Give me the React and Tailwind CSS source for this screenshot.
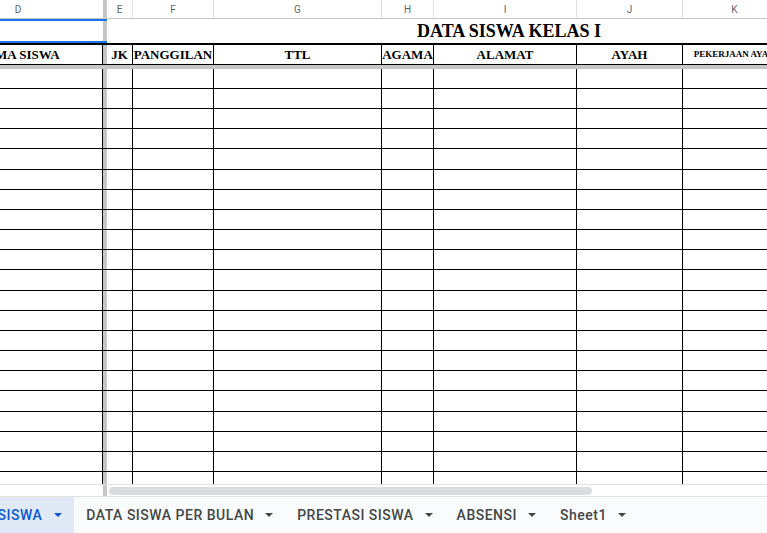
import React from "react";

const cols = [
  { letter: "E", w: "w-[26px]", head: "JK" },
  { letter: "F", w: "w-[81px]", head: "PANGGILAN" },
  { letter: "G", w: "w-[168px]", head: "TTL" },
  { letter: "H", w: "w-[52px]", head: "AGAMA" },
  { letter: "I", w: "w-[143px]", head: "ALAMAT" },
  { letter: "J", w: "w-[106px]", head: "AYAH" },
  { letter: "K", w: "w-[104px]", head: "PEKERJAAN AYAH", small: true },
];

const tabs = ["DATA SISWA PER BULAN", "PRESTASI SISWA", "ABSENSI", "Sheet1"];

const rows = Array.from({ length: 20 }, (_, i) => i);
const tallRows = [4, 10, 16];

const Caret = ({ color }) => (
  <svg width="8" height="4" viewBox="0 0 8 4" className="shrink-0">
    <path d="M0 0h8L4 4z" fill={color} />
  </svg>
);

// the grey freeze bar between frozen column D and the rest
const Bar = ({ className = "" }) => (
  <div className={"w-[4px] shrink-0 bg-[#c4c7c5] " + className}></div>
);

const App = () => {
  return (
    <div className="w-[767px] h-[533px] overflow-hidden bg-white flex flex-col font-['Roboto',sans-serif]">
      {/* column letters */}
      <div className="flex h-[19px] shrink-0 border-b border-[#c4c7c5]">
        <div className="w-[103px] shrink-0 overflow-hidden">
          <div className="-ml-[66px] w-[168px] h-full flex items-center justify-center text-[10px] text-[#5f6368]">
            D
          </div>
        </div>
        <Bar />
        <div className="flex flex-1 overflow-hidden">
          {cols.map((c) => (
            <div
              key={c.letter}
              className={c.w + " shrink-0 h-full flex items-center justify-center border-r border-[#e1e3e1] text-[10px] text-[#5f6368]"}
            >
              {c.letter}
            </div>
          ))}
        </div>
      </div>

      {/* row 1: title */}
      <div className="flex h-[24px] shrink-0">
        <div className="w-[103px] shrink-0 border-y-2 border-[#1a73e8]"></div>
        <Bar className="border-y-2 border-[#1a73e8]" />
        <div className="flex-1 flex items-center pl-[310px] whitespace-nowrap font-['Liberation_Serif',serif] font-bold text-[18px] text-black">
          DATA SISWA KELAS I
        </div>
      </div>

      {/* row 2: table header */}
      <div className="flex h-[22px] shrink-0 border-t-2 border-b border-black font-['Liberation_Serif',serif] font-bold text-[13px] text-black">
        <div className="w-[103px] shrink-0 overflow-hidden border-r border-black">
          <div className="-ml-[66px] w-[168px] h-full flex items-center justify-center whitespace-nowrap">
            NAMA SISWA
          </div>
        </div>
        <Bar />
        <div className="flex flex-1 overflow-hidden">
          {cols.map((c) => (
            <div
              key={c.letter}
              className={
                c.w +
                " shrink-0 h-full flex items-center justify-center border-r border-black whitespace-nowrap " +
                (c.small ? "text-[9px]" : "")
              }
            >
              {c.head}
            </div>
          ))}
        </div>
      </div>

      {/* horizontal freeze bar */}
      <div className="h-[4px] shrink-0 bg-[#c4c7c5]"></div>

      {/* data rows */}
      {rows.map((r) => (
        <div
          key={r}
          className={"flex shrink-0 border-b border-black " + (tallRows.includes(r) ? "h-[21px]" : "h-[20px]")}
        >
          <div className="w-[103px] shrink-0 border-r border-black"></div>
          <Bar />
          <div className="flex flex-1 overflow-hidden">
            {cols.map((c) => (
              <div key={c.letter} className={c.w + " shrink-0 h-full border-r border-black"}></div>
            ))}
          </div>
        </div>
      ))}

      {/* partial row under the last line */}
      <div className="flex h-[12px] shrink-0">
        <div className="w-[103px] shrink-0 border-r border-black"></div>
        <Bar />
        <div className="flex flex-1 overflow-hidden">
          {cols.map((c) => (
            <div key={c.letter} className={c.w + " shrink-0 h-full border-r border-black"}></div>
          ))}
        </div>
      </div>

      {/* horizontal scrollbar */}
      <div className="flex h-[13px] shrink-0 border-y border-[#e1e3e1] bg-white">
        <div className="w-[103px] shrink-0"></div>
        <Bar />
        <div className="flex-1 flex items-center pl-[2px]">
          <div className="w-[483px] h-[8px] rounded-full bg-[#dadce0]"></div>
        </div>
      </div>

      {/* sheet tabs */}
      <div className="flex h-[36px] shrink-0 bg-[#f9fbfd] overflow-hidden text-[14px] font-medium tracking-[0.5px] whitespace-nowrap">
        <div className="flex items-center h-full bg-[#e1e9f7] pr-3 gap-3 text-[#0b57d0] shrink-0">
          <span className="-ml-[43px]">DATA SISWA</span>
          <Caret color="#0b57d0" />
        </div>
        {tabs.map((t) => (
          <div key={t} className="flex items-center h-full px-3 gap-[11px] text-[#444746] shrink-0">
            <span>{t}</span>
            <Caret color="#444746" />
          </div>
        ))}
      </div>
    </div>
  );
};

export default App;
